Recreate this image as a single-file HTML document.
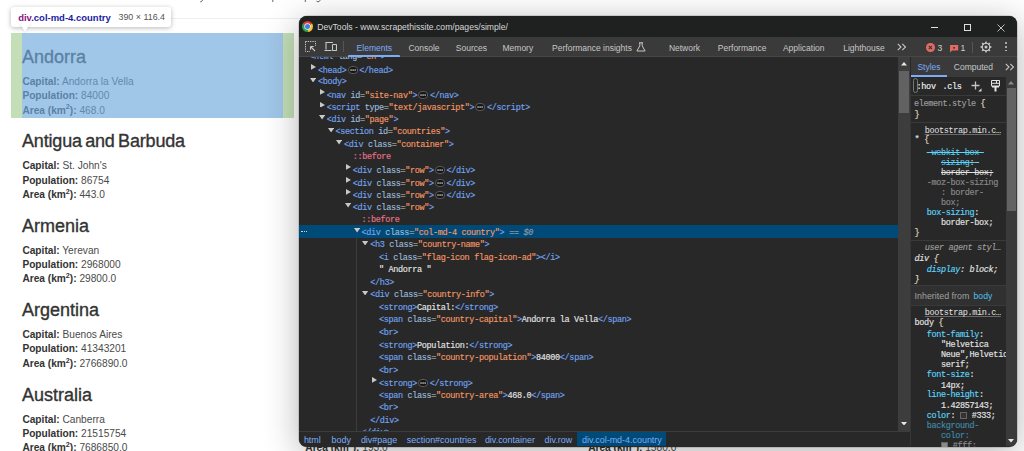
<!DOCTYPE html>
<html><head><meta charset="utf-8"><style>
*{margin:0;padding:0}
html,body{width:1024px;height:451px;overflow:hidden;background:#fff}
body{position:relative;font-family:"Liberation Sans",sans-serif}
.abs{position:absolute;white-space:pre}
.mono{font-family:"Liberation Mono",monospace;letter-spacing:-0.34px;-webkit-text-stroke:0.15px currentColor}
sup{font-size:70%;vertical-align:0;position:relative;top:-0.6em;line-height:0}
b{font-weight:700}
.val{color:#4a4a4a}
.tip{background:#fff;border-radius:3px;box-shadow:0 1px 5px rgba(0,0,0,.28)}
.tiparrow{width:0;height:0;border-left:6.5px solid transparent;border-right:6.5px solid transparent;border-top:10px solid #fff;filter:drop-shadow(0 1.5px 1px rgba(0,0,0,.10))}
#win{position:absolute;left:299px;top:16px;width:718px;height:430.5px;border-radius:8px;overflow:hidden;background:#282828;
 box-shadow:0 6px 34px rgba(0,0,0,.30),0 0 0 0.5px rgba(0,0,0,.25)}
.ell{display:inline-block;vertical-align:-1.3px;margin:0 1.4px 0 1.2px}
.tri{width:0;height:0}
.tc{border-top:2.9px solid transparent;border-bottom:2.9px solid transparent;border-left:5px solid #c8c8c8}
.to{border-left:3.1px solid transparent;border-right:3.1px solid transparent;border-top:4.5px solid #c8c8c8}
s{text-decoration-thickness:0.7px;-webkit-text-stroke:0}
.sw{display:inline-block;width:7px;height:7px;border:1px solid #666;box-sizing:border-box;vertical-align:-1px}
</style></head>
<body>
<div class="abs" style="left:11px;top:18px;width:290px;height:1px;background:#eee"></div>
<svg class="abs" style="left:0;top:0" width="330" height="4" viewBox="0 0 330 4"><g stroke="#555" stroke-width="0.9" fill="none"><path d="M203.2 -1L201.8 1.3Q201.2 2 200.2 1.8"/><path d="M272.8 -1V2"/><path d="M305.3 -1V2"/><path d="M319.9 -1V0.6Q319.4 1.9 317.9 1.7Q316.8 1.6 316.5 1.2"/></g></svg>
<div class="abs " style="left:22.00px;top:47.76px;font-size:18px;line-height:18px;color:#333;font-weight:400;-webkit-text-stroke:0.35px #333;">Andorra</div>
<div class="abs " style="left:22.40px;top:76.70px;font-size:10.16px;line-height:10.16px;color:#333;font-weight:400;"><b>Capital:</b> <span class="val">Andorra la Vella</span></div>
<div class="abs " style="left:22.40px;top:91.10px;font-size:10.16px;line-height:10.16px;color:#333;font-weight:400;"><b>Population:</b> <span class="val">84000</span></div>
<div class="abs " style="left:22.40px;top:105.50px;font-size:10.16px;line-height:10.16px;color:#333;font-weight:400;"><b>Area (km<sup>2</sup>):</b> <span class="val">468.0</span></div>
<div class="abs " style="left:22.00px;top:132.21px;font-size:18px;line-height:18px;color:#333;font-weight:400;word-spacing:-1.5px;letter-spacing:-0.17px;-webkit-text-stroke:0.35px #333;">Antigua and Barbuda</div>
<div class="abs " style="left:22.40px;top:161.15px;font-size:10.16px;line-height:10.16px;color:#333;font-weight:400;"><b>Capital:</b> <span class="val">St. John&#x27;s</span></div>
<div class="abs " style="left:22.40px;top:175.55px;font-size:10.16px;line-height:10.16px;color:#333;font-weight:400;"><b>Population:</b> <span class="val">86754</span></div>
<div class="abs " style="left:22.40px;top:189.95px;font-size:10.16px;line-height:10.16px;color:#333;font-weight:400;"><b>Area (km<sup>2</sup>):</b> <span class="val">443.0</span></div>
<div class="abs " style="left:22.00px;top:216.66px;font-size:18px;line-height:18px;color:#333;font-weight:400;-webkit-text-stroke:0.35px #333;">Armenia</div>
<div class="abs " style="left:22.40px;top:245.60px;font-size:10.16px;line-height:10.16px;color:#333;font-weight:400;"><b>Capital:</b> <span class="val">Yerevan</span></div>
<div class="abs " style="left:22.40px;top:260.00px;font-size:10.16px;line-height:10.16px;color:#333;font-weight:400;"><b>Population:</b> <span class="val">2968000</span></div>
<div class="abs " style="left:22.40px;top:274.40px;font-size:10.16px;line-height:10.16px;color:#333;font-weight:400;"><b>Area (km<sup>2</sup>):</b> <span class="val">29800.0</span></div>
<div class="abs " style="left:22.00px;top:301.11px;font-size:18px;line-height:18px;color:#333;font-weight:400;-webkit-text-stroke:0.35px #333;">Argentina</div>
<div class="abs " style="left:22.40px;top:330.05px;font-size:10.16px;line-height:10.16px;color:#333;font-weight:400;"><b>Capital:</b> <span class="val">Buenos Aires</span></div>
<div class="abs " style="left:22.40px;top:344.45px;font-size:10.16px;line-height:10.16px;color:#333;font-weight:400;"><b>Population:</b> <span class="val">41343201</span></div>
<div class="abs " style="left:22.40px;top:358.85px;font-size:10.16px;line-height:10.16px;color:#333;font-weight:400;"><b>Area (km<sup>2</sup>):</b> <span class="val">2766890.0</span></div>
<div class="abs " style="left:22.00px;top:385.56px;font-size:18px;line-height:18px;color:#333;font-weight:400;-webkit-text-stroke:0.35px #333;">Australia</div>
<div class="abs " style="left:22.40px;top:414.50px;font-size:10.16px;line-height:10.16px;color:#333;font-weight:400;"><b>Capital:</b> <span class="val">Canberra</span></div>
<div class="abs " style="left:22.40px;top:428.90px;font-size:10.16px;line-height:10.16px;color:#333;font-weight:400;"><b>Population:</b> <span class="val">21515754</span></div>
<div class="abs " style="left:22.40px;top:443.30px;font-size:10.16px;line-height:10.16px;color:#333;font-weight:400;"><b>Area (km<sup>2</sup>):</b> <span class="val">7686850.0</span></div>
<div class="abs " style="left:305.30px;top:443.30px;font-size:10.16px;line-height:10.16px;color:#333;font-weight:400;"><b>Area (km<sup>2</sup>):</b> <span class="val">193.0</span></div>
<div class="abs " style="left:588.20px;top:443.30px;font-size:10.16px;line-height:10.16px;color:#333;font-weight:400;"><b>Area (km<sup>2</sup>):</b> <span class="val">1580.0</span></div>
<div class="abs" style="left:11px;top:33px;width:11px;height:85px;background:rgba(147,196,125,.55)"></div>
<div class="abs" style="left:283px;top:33px;width:11px;height:85px;background:rgba(147,196,125,.55)"></div>
<div class="abs" style="left:22px;top:33px;width:261px;height:85px;background:rgba(111,168,220,.66)"></div>
<div class="abs tip" style="left:11px;top:6.6px;width:160px;height:20px"></div>
<div class="abs tiparrow" style="left:19.2px;top:22.2px"></div>
<div class="abs " style="left:18.20px;top:12.77px;font-size:9.49px;line-height:9.49px;color:#333;font-weight:700;"><span style="color:#881280">div</span><span style="color:#1a1aa6">.col-md-4.country</span></div>
<div class="abs " style="left:118.50px;top:13.28px;font-size:8.88px;line-height:8.88px;color:#555;font-weight:400;">390 × 116.4</div>
<div id="win">
<div class="abs" style="left:0.00px;top:0.00px;width:718.00px;height:21.00px;background:#1f2020"></div>
<div class="abs" style="left:2.70px;top:4.90px;width:11.00px;height:11.00px;border-radius:50%;background:conic-gradient(from -62deg,#db3b2f 0deg 120deg,#f6c22a 120deg 240deg,#2e9e48 240deg 360deg)"></div>
<div class="abs" style="left:5.50px;top:7.70px;width:5.40px;height:5.40px;border-radius:50%;background:#3d7fe8;box-shadow:0 0 0 0.7px #f0f0f0"></div>
<div class="abs " style="left:18.20px;top:7.19px;font-size:8.63px;line-height:8.63px;color:#d8d8d8;font-weight:400;">DevTools - www.scrapethissite.com/pages/simple/</div>
<div class="abs" style="left:631.80px;top:11.00px;width:7.40px;height:1.00px;background:#e0e0e0"></div>
<div class="abs" style="left:665.20px;top:8.40px;width:6.80px;height:6.80px;border:1px solid #e0e0e0;box-sizing:border-box"></div>
<svg class="abs" style="left:698.0px;top:8.0px" width="8" height="8" viewBox="0 0 8 8"><path d="M0.5 0.5L7.5 7.5M7.5 0.5L0.5 7.5" stroke="#d0d0d0" stroke-width="0.9"/></svg>
<div class="abs" style="left:0.00px;top:21.00px;width:718.00px;height:19.60px;background:#3a3a3a"></div>
<div class="abs" style="left:0.00px;top:39.80px;width:718.00px;height:0.80px;background:#474747"></div>
<svg class="abs" style="left:6.0px;top:25.0px" width="11" height="11" viewBox="0 0 11 11"><path d="M0.5 0.5h10v4.5M0.5 0.5v10h4.5" stroke="#c8c8c8" stroke-width="1" fill="none" stroke-dasharray="1.3 1"/><path d="M5.5 5.5L10 10M5.5 5.5h3.2M5.5 5.5v3.2" stroke="#c8c8c8" stroke-width="1.1" fill="none"/></svg>
<svg class="abs" style="left:25.0px;top:25.0px" width="13" height="11" viewBox="0 0 13 11"><path d="M2 8.5V1.5h7M0.5 9.5h7" stroke="#c8c8c8" stroke-width="1.1" fill="none"/><rect x="8.5" y="3.5" width="4" height="6" rx="0.5" stroke="#c8c8c8" stroke-width="1.1" fill="none"/></svg>
<div class="abs" style="left:44.00px;top:25.00px;width:1.00px;height:11.00px;background:#555"></div>
<div class="abs " style="left:57.60px;top:27.60px;font-size:8.5px;line-height:8.5px;color:#7cacf8;font-weight:400;">Elements</div>
<div class="abs " style="left:109.40px;top:27.60px;font-size:8.5px;line-height:8.5px;color:#c7c7c7;font-weight:400;">Console</div>
<div class="abs " style="left:156.80px;top:27.60px;font-size:8.5px;line-height:8.5px;color:#c7c7c7;font-weight:400;">Sources</div>
<div class="abs " style="left:203.50px;top:27.60px;font-size:8.5px;line-height:8.5px;color:#c7c7c7;font-weight:400;">Memory</div>
<div class="abs " style="left:253.10px;top:27.60px;font-size:8.5px;line-height:8.5px;color:#c7c7c7;font-weight:400;">Performance insights</div>
<div class="abs " style="left:369.90px;top:27.60px;font-size:8.5px;line-height:8.5px;color:#c7c7c7;font-weight:400;">Network</div>
<div class="abs " style="left:418.80px;top:27.60px;font-size:8.5px;line-height:8.5px;color:#c7c7c7;font-weight:400;">Performance</div>
<div class="abs " style="left:483.90px;top:27.60px;font-size:8.5px;line-height:8.5px;color:#c7c7c7;font-weight:400;">Application</div>
<div class="abs " style="left:544.20px;top:27.60px;font-size:8.5px;line-height:8.5px;color:#c7c7c7;font-weight:400;">Lighthouse</div>
<div class="abs" style="left:49.00px;top:39.10px;width:51.60px;height:1.50px;background:#7cacf8;border-radius:1px 1px 0 0"></div>
<svg class="abs" style="left:336.5px;top:26.0px" width="10" height="10" viewBox="0 0 10 10"><path d="M3 0.8h4M3.8 0.8v3L0.9 9h8.2L6.2 3.8v-3" stroke="#c7c7c7" stroke-width="1" fill="none"/></svg>
<svg class="abs" style="left:598.0px;top:26.799999999999997px" width="10" height="8" viewBox="0 0 10 8"><path d="M0.8 0.8L4 4L0.8 7.2M5.3 0.8L8.5 4L5.3 7.2" stroke="#c7c7c7" stroke-width="1.1" fill="none"/></svg>
<div class="abs" style="left:627.30px;top:27.00px;width:8.60px;height:8.60px;border-radius:50%;background:#e46962"></div>
<svg class="abs" style="left:627.3px;top:27.0px" width="9" height="9" viewBox="0 0 9 9"><path d="M2.8 2.8L6 6M6 2.8L2.8 6" stroke="#3a3a3a" stroke-width="1.1"/></svg>
<div class="abs " style="left:638.60px;top:28.02px;font-size:8.6px;line-height:8.6px;color:#d0d0d0;font-weight:400;">3</div>
<svg class="abs" style="left:650.6px;top:28.5px" width="9" height="8" viewBox="0 0 9 8"><path d="M0 0h8.2v5.6H2.2L0 7.5z" fill="#e46962"/><rect x="3.2" y="2" width="1.8" height="1.6" fill="#3a3a3a"/></svg>
<div class="abs " style="left:661.50px;top:28.32px;font-size:8.6px;line-height:8.6px;color:#d0d0d0;font-weight:400;">1</div>
<div class="abs" style="left:673.00px;top:25.50px;width:1.00px;height:11.10px;background:#555"></div>
<svg class="abs" style="left:680.5px;top:24.700000000000003px" width="12" height="12" viewBox="0 0 12 12"><circle cx="6" cy="6" r="3.8" fill="none" stroke="#c7c7c7" stroke-width="1.1"/><rect x="5.15" y="0.6" width="1.7" height="2.2" fill="#c7c7c7" transform="rotate(0 6 6)"/><rect x="5.15" y="0.6" width="1.7" height="2.2" fill="#c7c7c7" transform="rotate(45 6 6)"/><rect x="5.15" y="0.6" width="1.7" height="2.2" fill="#c7c7c7" transform="rotate(90 6 6)"/><rect x="5.15" y="0.6" width="1.7" height="2.2" fill="#c7c7c7" transform="rotate(135 6 6)"/><rect x="5.15" y="0.6" width="1.7" height="2.2" fill="#c7c7c7" transform="rotate(180 6 6)"/><rect x="5.15" y="0.6" width="1.7" height="2.2" fill="#c7c7c7" transform="rotate(225 6 6)"/><rect x="5.15" y="0.6" width="1.7" height="2.2" fill="#c7c7c7" transform="rotate(270 6 6)"/><rect x="5.15" y="0.6" width="1.7" height="2.2" fill="#c7c7c7" transform="rotate(315 6 6)"/><circle cx="6" cy="6" r="1.5" fill="#c7c7c7"/></svg>
<div class="abs" style="left:706.00px;top:25.90px;width:1.80px;height:1.80px;background:#c7c7c7;border-radius:50%"></div>
<div class="abs" style="left:706.00px;top:29.80px;width:1.80px;height:1.80px;background:#c7c7c7;border-radius:50%"></div>
<div class="abs" style="left:706.00px;top:33.70px;width:1.80px;height:1.80px;background:#c7c7c7;border-radius:50%"></div>
<div class="abs" style="left:0.00px;top:40.60px;width:599.00px;height:374.10px;background:#282828"></div>
<div class="abs" style="left:0.00px;top:209.30px;width:599.00px;height:12.60px;background:#004a77"></div>
<div class="abs" style="left:57.00px;top:221.90px;width:1.00px;height:192.80px;background:#3c3c3c"></div>
<div class="abs" style="left:0;top:40.6px;width:599.0px;height:374.09999999999997px;overflow:hidden"><div class="abs mono" style="left:10.30px;top:-3.45px;font-size:8.5px;line-height:8.5px"><span style="color:#72a4ef">&lt;html</span> <span style="color:#9bbbdc">lang</span><span style="color:#9a9a9a">=</span><span style="color:#f29766">&quot;en&quot;</span><span style="color:#72a4ef">&gt;</span></div>
<svg class="abs" style="left:12.40px;top:7.40px" width="5" height="5.8" viewBox="0 0 5 5.8"><path d="M0 0L5 2.9L0 5.8z" fill="#c8c8c8"/></svg>
<div class="abs mono" style="left:19.00px;top:9.09px;font-size:8.5px;line-height:8.5px"><span style="color:#72a4ef">&lt;head&gt;</span><svg class="ell" width="10.2" height="8" viewBox="0 0 10.2 8"><rect x="0.5" y="0.5" width="9.2" height="7" rx="3.5" fill="#151515" stroke="#5c5c5c" stroke-width="1"/><rect x="2.4" y="3.4" width="1.3" height="1.3" fill="#e8e8e8"/><rect x="4.45" y="3.4" width="1.3" height="1.3" fill="#e8e8e8"/><rect x="6.5" y="3.4" width="1.3" height="1.3" fill="#e8e8e8"/></svg><span style="color:#72a4ef">&lt;/head&gt;</span></div>
<svg class="abs" style="left:11.20px;top:21.04px" width="6.2" height="4.5" viewBox="0 0 6.2 4.5"><path d="M0 0L6.2 0L3.1 4.5z" fill="#c8c8c8"/></svg>
<div class="abs mono" style="left:19.00px;top:21.63px;font-size:8.5px;line-height:8.5px"><span style="color:#72a4ef">&lt;body&gt;</span></div>
<svg class="abs" style="left:21.10px;top:32.48px" width="5" height="5.8" viewBox="0 0 5 5.8"><path d="M0 0L5 2.9L0 5.8z" fill="#c8c8c8"/></svg>
<div class="abs mono" style="left:27.70px;top:34.17px;font-size:8.5px;line-height:8.5px"><span style="color:#72a4ef">&lt;nav</span> <span style="color:#9bbbdc">id</span><span style="color:#9a9a9a">=</span><span style="color:#f29766">&quot;site-nav&quot;</span><span style="color:#72a4ef">&gt;</span><svg class="ell" width="10.2" height="8" viewBox="0 0 10.2 8"><rect x="0.5" y="0.5" width="9.2" height="7" rx="3.5" fill="#151515" stroke="#5c5c5c" stroke-width="1"/><rect x="2.4" y="3.4" width="1.3" height="1.3" fill="#e8e8e8"/><rect x="4.45" y="3.4" width="1.3" height="1.3" fill="#e8e8e8"/><rect x="6.5" y="3.4" width="1.3" height="1.3" fill="#e8e8e8"/></svg><span style="color:#72a4ef">&lt;/nav&gt;</span></div>
<svg class="abs" style="left:21.10px;top:45.02px" width="5" height="5.8" viewBox="0 0 5 5.8"><path d="M0 0L5 2.9L0 5.8z" fill="#c8c8c8"/></svg>
<div class="abs mono" style="left:27.70px;top:46.71px;font-size:8.5px;line-height:8.5px"><span style="color:#72a4ef">&lt;script</span> <span style="color:#9bbbdc">type</span><span style="color:#9a9a9a">=</span><span style="color:#f29766">&quot;text/javascript&quot;</span><span style="color:#72a4ef">&gt;</span><svg class="ell" width="10.2" height="8" viewBox="0 0 10.2 8"><rect x="0.5" y="0.5" width="9.2" height="7" rx="3.5" fill="#151515" stroke="#5c5c5c" stroke-width="1"/><rect x="2.4" y="3.4" width="1.3" height="1.3" fill="#e8e8e8"/><rect x="4.45" y="3.4" width="1.3" height="1.3" fill="#e8e8e8"/><rect x="6.5" y="3.4" width="1.3" height="1.3" fill="#e8e8e8"/></svg><span style="color:#72a4ef">&lt;/script&gt;</span></div>
<svg class="abs" style="left:19.90px;top:58.66px" width="6.2" height="4.5" viewBox="0 0 6.2 4.5"><path d="M0 0L6.2 0L3.1 4.5z" fill="#c8c8c8"/></svg>
<div class="abs mono" style="left:27.70px;top:59.25px;font-size:8.5px;line-height:8.5px"><span style="color:#72a4ef">&lt;div</span> <span style="color:#9bbbdc">id</span><span style="color:#9a9a9a">=</span><span style="color:#f29766">&quot;page&quot;</span><span style="color:#72a4ef">&gt;</span></div>
<svg class="abs" style="left:28.60px;top:71.20px" width="6.2" height="4.5" viewBox="0 0 6.2 4.5"><path d="M0 0L6.2 0L3.1 4.5z" fill="#c8c8c8"/></svg>
<div class="abs mono" style="left:36.40px;top:71.79px;font-size:8.5px;line-height:8.5px"><span style="color:#72a4ef">&lt;section</span> <span style="color:#9bbbdc">id</span><span style="color:#9a9a9a">=</span><span style="color:#f29766">&quot;countries&quot;</span><span style="color:#72a4ef">&gt;</span></div>
<svg class="abs" style="left:37.30px;top:83.74px" width="6.2" height="4.5" viewBox="0 0 6.2 4.5"><path d="M0 0L6.2 0L3.1 4.5z" fill="#c8c8c8"/></svg>
<div class="abs mono" style="left:45.10px;top:84.33px;font-size:8.5px;line-height:8.5px"><span style="color:#72a4ef">&lt;div</span> <span style="color:#9bbbdc">class</span><span style="color:#9a9a9a">=</span><span style="color:#f29766">&quot;container&quot;</span><span style="color:#72a4ef">&gt;</span></div>
<div class="abs mono" style="left:53.80px;top:96.87px;font-size:8.5px;line-height:8.5px"><span style="color:#e5738c">::before</span></div>
<svg class="abs" style="left:47.20px;top:107.72px" width="5" height="5.8" viewBox="0 0 5 5.8"><path d="M0 0L5 2.9L0 5.8z" fill="#c8c8c8"/></svg>
<div class="abs mono" style="left:53.80px;top:109.41px;font-size:8.5px;line-height:8.5px"><span style="color:#72a4ef">&lt;div</span> <span style="color:#9bbbdc">class</span><span style="color:#9a9a9a">=</span><span style="color:#f29766">&quot;row&quot;</span><span style="color:#72a4ef">&gt;</span><svg class="ell" width="10.2" height="8" viewBox="0 0 10.2 8"><rect x="0.5" y="0.5" width="9.2" height="7" rx="3.5" fill="#151515" stroke="#5c5c5c" stroke-width="1"/><rect x="2.4" y="3.4" width="1.3" height="1.3" fill="#e8e8e8"/><rect x="4.45" y="3.4" width="1.3" height="1.3" fill="#e8e8e8"/><rect x="6.5" y="3.4" width="1.3" height="1.3" fill="#e8e8e8"/></svg><span style="color:#72a4ef">&lt;/div&gt;</span></div>
<svg class="abs" style="left:47.20px;top:120.26px" width="5" height="5.8" viewBox="0 0 5 5.8"><path d="M0 0L5 2.9L0 5.8z" fill="#c8c8c8"/></svg>
<div class="abs mono" style="left:53.80px;top:121.95px;font-size:8.5px;line-height:8.5px"><span style="color:#72a4ef">&lt;div</span> <span style="color:#9bbbdc">class</span><span style="color:#9a9a9a">=</span><span style="color:#f29766">&quot;row&quot;</span><span style="color:#72a4ef">&gt;</span><svg class="ell" width="10.2" height="8" viewBox="0 0 10.2 8"><rect x="0.5" y="0.5" width="9.2" height="7" rx="3.5" fill="#151515" stroke="#5c5c5c" stroke-width="1"/><rect x="2.4" y="3.4" width="1.3" height="1.3" fill="#e8e8e8"/><rect x="4.45" y="3.4" width="1.3" height="1.3" fill="#e8e8e8"/><rect x="6.5" y="3.4" width="1.3" height="1.3" fill="#e8e8e8"/></svg><span style="color:#72a4ef">&lt;/div&gt;</span></div>
<svg class="abs" style="left:47.20px;top:132.80px" width="5" height="5.8" viewBox="0 0 5 5.8"><path d="M0 0L5 2.9L0 5.8z" fill="#c8c8c8"/></svg>
<div class="abs mono" style="left:53.80px;top:134.49px;font-size:8.5px;line-height:8.5px"><span style="color:#72a4ef">&lt;div</span> <span style="color:#9bbbdc">class</span><span style="color:#9a9a9a">=</span><span style="color:#f29766">&quot;row&quot;</span><span style="color:#72a4ef">&gt;</span><svg class="ell" width="10.2" height="8" viewBox="0 0 10.2 8"><rect x="0.5" y="0.5" width="9.2" height="7" rx="3.5" fill="#151515" stroke="#5c5c5c" stroke-width="1"/><rect x="2.4" y="3.4" width="1.3" height="1.3" fill="#e8e8e8"/><rect x="4.45" y="3.4" width="1.3" height="1.3" fill="#e8e8e8"/><rect x="6.5" y="3.4" width="1.3" height="1.3" fill="#e8e8e8"/></svg><span style="color:#72a4ef">&lt;/div&gt;</span></div>
<svg class="abs" style="left:46.00px;top:146.44px" width="6.2" height="4.5" viewBox="0 0 6.2 4.5"><path d="M0 0L6.2 0L3.1 4.5z" fill="#c8c8c8"/></svg>
<div class="abs mono" style="left:53.80px;top:147.03px;font-size:8.5px;line-height:8.5px"><span style="color:#72a4ef">&lt;div</span> <span style="color:#9bbbdc">class</span><span style="color:#9a9a9a">=</span><span style="color:#f29766">&quot;row&quot;</span><span style="color:#72a4ef">&gt;</span></div>
<div class="abs mono" style="left:62.50px;top:159.57px;font-size:8.5px;line-height:8.5px"><span style="color:#e5738c">::before</span></div>
<svg class="abs" style="left:54.70px;top:171.52px" width="6.2" height="4.5" viewBox="0 0 6.2 4.5"><path d="M0 0L6.2 0L3.1 4.5z" fill="#c8c8c8"/></svg>
<div class="abs mono" style="left:62.50px;top:172.11px;font-size:8.5px;line-height:8.5px"><span style="color:#72a4ef">&lt;div</span> <span style="color:#9bbbdc">class</span><span style="color:#9a9a9a">=</span><span style="color:#f29766">&quot;col-md-4 country&quot;</span><span style="color:#72a4ef">&gt;</span> <span style="color:#8d99a5;font-style:italic">== $0</span></div>
<svg class="abs" style="left:63.40px;top:184.06px" width="6.2" height="4.5" viewBox="0 0 6.2 4.5"><path d="M0 0L6.2 0L3.1 4.5z" fill="#c8c8c8"/></svg>
<div class="abs mono" style="left:71.20px;top:184.65px;font-size:8.5px;line-height:8.5px"><span style="color:#72a4ef">&lt;h3</span> <span style="color:#9bbbdc">class</span><span style="color:#9a9a9a">=</span><span style="color:#f29766">&quot;country-name&quot;</span><span style="color:#72a4ef">&gt;</span></div>
<div class="abs mono" style="left:79.90px;top:197.19px;font-size:8.5px;line-height:8.5px"><span style="color:#72a4ef">&lt;i</span> <span style="color:#9bbbdc">class</span><span style="color:#9a9a9a">=</span><span style="color:#f29766">&quot;flag-icon flag-icon-ad&quot;</span><span style="color:#72a4ef">&gt;</span><span style="color:#72a4ef">&lt;/i&gt;</span></div>
<div class="abs mono" style="left:79.90px;top:209.73px;font-size:8.5px;line-height:8.5px"><span style="color:#e3e3e3">&quot; Andorra &quot;</span></div>
<div class="abs mono" style="left:71.20px;top:222.27px;font-size:8.5px;line-height:8.5px"><span style="color:#72a4ef">&lt;/h3&gt;</span></div>
<svg class="abs" style="left:63.40px;top:234.22px" width="6.2" height="4.5" viewBox="0 0 6.2 4.5"><path d="M0 0L6.2 0L3.1 4.5z" fill="#c8c8c8"/></svg>
<div class="abs mono" style="left:71.20px;top:234.81px;font-size:8.5px;line-height:8.5px"><span style="color:#72a4ef">&lt;div</span> <span style="color:#9bbbdc">class</span><span style="color:#9a9a9a">=</span><span style="color:#f29766">&quot;country-info&quot;</span><span style="color:#72a4ef">&gt;</span></div>
<div class="abs mono" style="left:79.90px;top:247.35px;font-size:8.5px;line-height:8.5px"><span style="color:#72a4ef">&lt;strong&gt;</span><span style="color:#e3e3e3">Capital:</span><span style="color:#72a4ef">&lt;/strong&gt;</span></div>
<div class="abs mono" style="left:79.90px;top:259.89px;font-size:8.5px;line-height:8.5px"><span style="color:#72a4ef">&lt;span</span> <span style="color:#9bbbdc">class</span><span style="color:#9a9a9a">=</span><span style="color:#f29766">&quot;country-capital&quot;</span><span style="color:#72a4ef">&gt;</span><span style="color:#e3e3e3">Andorra la Vella</span><span style="color:#72a4ef">&lt;/span&gt;</span></div>
<div class="abs mono" style="left:79.90px;top:272.43px;font-size:8.5px;line-height:8.5px"><span style="color:#72a4ef">&lt;br&gt;</span></div>
<div class="abs mono" style="left:79.90px;top:284.97px;font-size:8.5px;line-height:8.5px"><span style="color:#72a4ef">&lt;strong&gt;</span><span style="color:#e3e3e3">Population:</span><span style="color:#72a4ef">&lt;/strong&gt;</span></div>
<div class="abs mono" style="left:79.90px;top:297.51px;font-size:8.5px;line-height:8.5px"><span style="color:#72a4ef">&lt;span</span> <span style="color:#9bbbdc">class</span><span style="color:#9a9a9a">=</span><span style="color:#f29766">&quot;country-population&quot;</span><span style="color:#72a4ef">&gt;</span><span style="color:#e3e3e3">84000</span><span style="color:#72a4ef">&lt;/span&gt;</span></div>
<div class="abs mono" style="left:79.90px;top:310.05px;font-size:8.5px;line-height:8.5px"><span style="color:#72a4ef">&lt;br&gt;</span></div>
<svg class="abs" style="left:73.30px;top:320.90px" width="5" height="5.8" viewBox="0 0 5 5.8"><path d="M0 0L5 2.9L0 5.8z" fill="#c8c8c8"/></svg>
<div class="abs mono" style="left:79.90px;top:322.59px;font-size:8.5px;line-height:8.5px"><span style="color:#72a4ef">&lt;strong&gt;</span><svg class="ell" width="10.2" height="8" viewBox="0 0 10.2 8"><rect x="0.5" y="0.5" width="9.2" height="7" rx="3.5" fill="#151515" stroke="#5c5c5c" stroke-width="1"/><rect x="2.4" y="3.4" width="1.3" height="1.3" fill="#e8e8e8"/><rect x="4.45" y="3.4" width="1.3" height="1.3" fill="#e8e8e8"/><rect x="6.5" y="3.4" width="1.3" height="1.3" fill="#e8e8e8"/></svg><span style="color:#72a4ef">&lt;/strong&gt;</span></div>
<div class="abs mono" style="left:79.90px;top:335.13px;font-size:8.5px;line-height:8.5px"><span style="color:#72a4ef">&lt;span</span> <span style="color:#9bbbdc">class</span><span style="color:#9a9a9a">=</span><span style="color:#f29766">&quot;country-area&quot;</span><span style="color:#72a4ef">&gt;</span><span style="color:#e3e3e3">468.0</span><span style="color:#72a4ef">&lt;/span&gt;</span></div>
<div class="abs mono" style="left:79.90px;top:347.67px;font-size:8.5px;line-height:8.5px"><span style="color:#72a4ef">&lt;br&gt;</span></div>
<div class="abs mono" style="left:71.20px;top:360.21px;font-size:8.5px;line-height:8.5px"><span style="color:#72a4ef">&lt;/div&gt;</span></div>
<div class="abs mono" style="left:62.50px;top:372.75px;font-size:8.5px;line-height:8.5px"><span style="color:#72a4ef">&lt;/div&gt;</span></div></div>
<div class="abs" style="left:2.30px;top:214.60px;width:1.40px;height:1.40px;background:#d0d0d0"></div>
<div class="abs" style="left:4.60px;top:214.60px;width:1.40px;height:1.40px;background:#d0d0d0"></div>
<div class="abs" style="left:6.90px;top:214.60px;width:1.40px;height:1.40px;background:#d0d0d0"></div>
<div class="abs" style="left:599.00px;top:40.60px;width:12.00px;height:374.10px;background:#3d3d3d"></div>
<div class="abs" style="left:600.30px;top:55.00px;width:9.90px;height:41.80px;background:#626262"></div>
<svg class="abs" style="left:602.0px;top:46.0px" width="6" height="3.5" viewBox="0 0 6 3.5"><path d="M0 3.5L3 0L6 3.5z" fill="#e8e8e8"/></svg>
<svg class="abs" style="left:602.0px;top:405.5px" width="6" height="3.5" viewBox="0 0 6 3.5"><path d="M0 0L3 3.5L6 0z" fill="#e8e8e8"/></svg>
<div class="abs" style="left:611.00px;top:60.60px;width:1.00px;height:369.90px;background:#363636"></div>
<div class="abs" style="left:0.00px;top:414.70px;width:611.00px;height:15.80px;background:#282828"></div>
<div class="abs" style="left:0.00px;top:414.70px;width:611.00px;height:1.00px;background:#3c3c3c"></div>
<div class="abs" style="left:278.10px;top:415.70px;width:89.40px;height:14.80px;background:#004a77"></div>
<div class="abs " style="left:4.90px;top:420.02px;font-size:8.95px;line-height:8.95px;color:#7cacf8;font-weight:400;">html</div>
<div class="abs " style="left:32.60px;top:420.02px;font-size:8.95px;line-height:8.95px;color:#7cacf8;font-weight:400;">body</div>
<div class="abs " style="left:61.90px;top:420.02px;font-size:8.95px;line-height:8.95px;color:#7cacf8;font-weight:400;">div#page</div>
<div class="abs " style="left:107.80px;top:420.02px;font-size:8.95px;line-height:8.95px;color:#7cacf8;font-weight:400;">section#countries</div>
<div class="abs " style="left:185.90px;top:420.02px;font-size:8.95px;line-height:8.95px;color:#7cacf8;font-weight:400;">div.container</div>
<div class="abs " style="left:245.50px;top:420.02px;font-size:8.95px;line-height:8.95px;color:#7cacf8;font-weight:400;">div.row</div>
<div class="abs " style="left:283.00px;top:420.02px;font-size:8.95px;line-height:8.95px;color:#7cacf8;font-weight:400;">div.col-md-4.country</div>
<div class="abs" style="left:612.00px;top:40.60px;width:106.00px;height:389.90px;background:#282828"></div>
<div class="abs" style="left:612.00px;top:40.60px;width:106.00px;height:20.00px;background:#3a3a3a"></div>
<div class="abs " style="left:618.40px;top:47.30px;font-size:8.5px;line-height:8.5px;color:#7cacf8;font-weight:400;">Styles</div>
<div class="abs " style="left:654.80px;top:47.30px;font-size:8.5px;line-height:8.5px;color:#c7c7c7;font-weight:400;">Computed</div>
<svg class="abs" style="left:705.6px;top:46.6px" width="10" height="8" viewBox="0 0 10 8"><path d="M0.8 0.8L4 4L0.8 7.2M5.3 0.8L8.5 4L5.3 7.2" stroke="#c7c7c7" stroke-width="1.1" fill="none"/></svg>
<div class="abs" style="left:612.00px;top:59.00px;width:36.00px;height:1.80px;background:#7cacf8"></div>
<div class="abs" style="left:612.00px;top:79.20px;width:95.00px;height:1.00px;background:#3a3a3a"></div>
<div class="abs" style="left:614.00px;top:62.40px;width:5.30px;height:14.20px;border:1px solid #777;border-radius:3px;box-sizing:border-box"></div>
<div class="abs mono" style="left:617.60px;top:67.09px;font-size:8.5px;line-height:8.5px;color:#f0f0f0;">:hov</div>
<div class="abs mono" style="left:643.40px;top:67.09px;font-size:8.5px;line-height:8.5px;color:#f0f0f0;">.cls</div>
<svg class="abs" style="left:671.5px;top:65.0px" width="11" height="11" viewBox="0 0 11 11"><path d="M4.5 0.5v8M0.5 4.5h8" stroke="#c4c4c4" stroke-width="1.3"/><path d="M10.5 7.2v3.3h-3.3z" fill="#d8d8d8"/></svg>
<svg class="abs" style="left:692.0px;top:64.0px" width="9" height="12" viewBox="0 0 9 12"><path d="M0.5 0.5h8v5.5h-8z" fill="none" stroke="#e3e3e3" stroke-width="1"/><path d="M0.5 3.3h8" stroke="#e3e3e3"/><path d="M5.5 0.5v2.5" stroke="#e3e3e3"/><path d="M1 6h7v1.5H5.5v4h-2v-4H1z" fill="#e3e3e3"/></svg>
<div class="abs mono" style="left:614.90px;top:84.29px;font-size:8.5px;line-height:8.5px;color:#9e9e9e;">element.style <span style="color:#e6dcc0">{</span></div>
<div class="abs mono" style="left:615.60px;top:94.89px;font-size:8.5px;line-height:8.5px;color:#e6dcc0;">}</div>
<div class="abs" style="left:612.00px;top:105.90px;width:95.00px;height:1.00px;background:#3a3a3a"></div>
<div class="abs mono" style="left:625.70px;top:110.69px;font-size:8.5px;line-height:8.5px;color:#e3e3e3;"><span style="text-decoration:underline;text-decoration-color:rgba(150,150,150,.6);-webkit-text-stroke:0">bootstrap.min.c…</span></div>
<div class="abs mono" style="left:615.60px;top:120.49px;font-size:8.5px;line-height:8.5px;color:#e3e3e3;">* <span style="color:#e6dcc0">{</span></div>
<div class="abs mono" style="left:627.70px;top:132.89px;font-size:8.5px;line-height:8.5px;color:#5cd5fb;"><s>-webkit-box-</s></div>
<div class="abs mono" style="left:642.00px;top:142.89px;font-size:8.5px;line-height:8.5px;color:#5cd5fb;"><s>sizing<span style="color:#e3e3e3">:</span> </s></div>
<div class="abs mono" style="left:642.00px;top:152.99px;font-size:8.5px;line-height:8.5px;color:#e3e3e3;"><s>border-box;</s></div>
<div class="abs mono" style="left:627.70px;top:163.09px;font-size:8.5px;line-height:8.5px;color:#8a8a8a;">-moz-box-sizing</div>
<div class="abs mono" style="left:642.00px;top:173.29px;font-size:8.5px;line-height:8.5px;color:#8a8a8a;">: border-</div>
<div class="abs mono" style="left:642.00px;top:183.19px;font-size:8.5px;line-height:8.5px;color:#8a8a8a;">box;</div>
<div class="abs mono" style="left:627.70px;top:193.29px;font-size:8.5px;line-height:8.5px;color:#5cd5fb;">box-sizing<span style="color:#e3e3e3">:</span></div>
<div class="abs mono" style="left:642.00px;top:203.39px;font-size:8.5px;line-height:8.5px;color:#e3e3e3;">border-box;</div>
<div class="abs mono" style="left:615.60px;top:213.49px;font-size:8.5px;line-height:8.5px;color:#e6dcc0;">}</div>
<div class="abs" style="left:612.00px;top:224.30px;width:95.00px;height:1.00px;background:#3a3a3a"></div>
<div class="abs mono" style="left:625.70px;top:228.29px;font-size:8.5px;line-height:8.5px;color:#9e9e9e;font-style:italic">user agent styl…</div>
<div class="abs mono" style="left:615.60px;top:238.59px;font-size:8.5px;line-height:8.5px;color:#e3e3e3;font-style:italic">div <span style="color:#e6dcc0">{</span></div>
<div class="abs mono" style="left:627.70px;top:250.09px;font-size:8.5px;line-height:8.5px;color:#e3e3e3;font-style:italic"><span style="color:#5cd5fb">display</span>: block;</div>
<div class="abs mono" style="left:615.60px;top:259.89px;font-size:8.5px;line-height:8.5px;color:#e6dcc0;font-style:italic">}</div>
<div class="abs" style="left:612.00px;top:270.00px;width:95.00px;height:19.00px;background:#303030"></div>
<div class="abs" style="left:612.00px;top:269.00px;width:95.00px;height:1.00px;background:#3a3a3a"></div>
<div class="abs" style="left:612.00px;top:289.00px;width:95.00px;height:1.00px;background:#3a3a3a"></div>
<div class="abs " style="left:615.60px;top:275.97px;font-size:8.9px;line-height:8.9px;color:#a0a0a0;font-weight:400;">Inherited from</div>
<div class="abs " style="left:674.60px;top:276.22px;font-size:8.6px;line-height:8.6px;color:#4ec0ee;font-weight:400;">body</div>
<div class="abs mono" style="left:625.70px;top:293.39px;font-size:8.5px;line-height:8.5px;color:#e3e3e3;"><span style="text-decoration:underline;text-decoration-color:rgba(150,150,150,.6);-webkit-text-stroke:0">bootstrap.min.c…</span></div>
<div class="abs mono" style="left:615.60px;top:303.09px;font-size:8.5px;line-height:8.5px;color:#e3e3e3;">body <span style="color:#e6dcc0">{</span></div>
<div class="abs mono" style="left:627.70px;top:314.89px;font-size:8.5px;line-height:8.5px;color:#5cd5fb;">font-family<span style="color:#e3e3e3">:</span></div>
<div class="abs mono" style="left:642.00px;top:324.89px;font-size:8.5px;line-height:8.5px;color:#e3e3e3;">"Helvetica</div>
<div class="abs" style="left:0;top:0;width:707.0px;height:500px;overflow:hidden"><div class="abs mono" style="left:642.00px;top:335.09px;font-size:8.5px;line-height:8.5px;color:#e3e3e3;">Neue",Helvetica,Arial,</div></div>
<div class="abs mono" style="left:642.00px;top:345.29px;font-size:8.5px;line-height:8.5px;color:#e3e3e3;">serif;</div>
<div class="abs mono" style="left:627.70px;top:355.39px;font-size:8.5px;line-height:8.5px;color:#5cd5fb;">font-size<span style="color:#e3e3e3">:</span></div>
<div class="abs mono" style="left:642.00px;top:365.59px;font-size:8.5px;line-height:8.5px;color:#e3e3e3;">14px;</div>
<div class="abs mono" style="left:627.70px;top:375.49px;font-size:8.5px;line-height:8.5px;color:#5cd5fb;">line-height<span style="color:#e3e3e3">:</span></div>
<div class="abs mono" style="left:642.00px;top:385.69px;font-size:8.5px;line-height:8.5px;color:#e3e3e3;">1.42857143;</div>
<div class="abs mono" style="left:627.70px;top:395.79px;font-size:8.5px;line-height:8.5px;color:#5cd5fb;">color<span style="color:#e3e3e3">: <span class="sw" style="background:#333"></span> #333;</span></div>
<div class="abs mono" style="left:627.70px;top:405.69px;font-size:8.5px;line-height:8.5px;color:#3f8aa8;">background-</div>
<div class="abs mono" style="left:642.00px;top:415.79px;font-size:8.5px;line-height:8.5px;color:#3f8aa8;">color:</div>
<div class="abs mono" style="left:642.00px;top:425.89px;font-size:8.5px;line-height:8.5px;color:#8a8a8a;"><span class="sw" style="background:#8a8a8a"></span> #fff;</div>
<div class="abs" style="left:707.00px;top:60.60px;width:11.00px;height:369.90px;background:#3a3a3a"></div>
<div class="abs" style="left:707.80px;top:72.00px;width:9.20px;height:123.00px;background:#626262"></div>
<svg class="abs" style="left:709.2px;top:65.2px" width="6" height="3.5" viewBox="0 0 6 3.5"><path d="M0 3.5L3 0L6 3.5z" fill="#8a8a8a"/></svg>
<svg class="abs" style="left:709.2px;top:423.0px" width="6" height="3.5" viewBox="0 0 6 3.5"><path d="M0 0L3 3.5L6 0z" fill="#e8e8e8"/></svg>
</div>
</body></html>
